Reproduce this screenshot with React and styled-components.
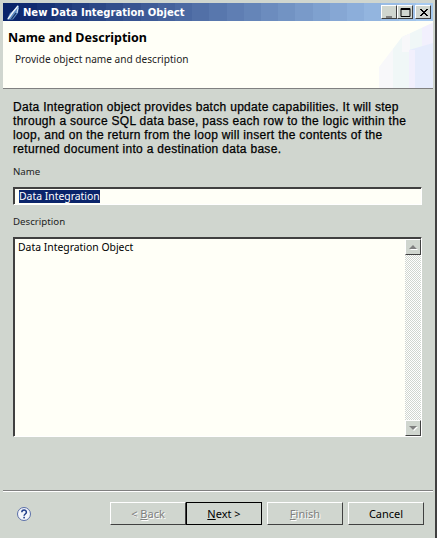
import React from "react";
import styled, { createGlobalStyle } from "styled-components";

const Colors = {
  FACE: "#d0d6cf",
  PAPER: "#fffff7",
  SHADOW: "#808080",
  DARK: "#404040",
  NAVY: "#0a246a",
};

const uiFont = `"Noto Sans", "DejaVu Sans", sans-serif`;

const GlobalStyle = createGlobalStyle`
  html, body {
    margin: 0;
    padding: 0;
    background: #fff;
  }
  * {
    box-sizing: border-box;
  }
`;

// the captured title bar gradient is banded, so build it from hard stops
const titleBands = (() => {
  const from = [10, 36, 106];
  const to = [166, 202, 240];
  const count = 25;
  const stops = [];
  for (let i = 0; i < count; i++) {
    const t = i / (count - 1);
    const c = from.map((v, n) => Math.round(v + (to[n] - v) * t));
    const start = ((i / count) * 100).toFixed(2);
    const end = (((i + 1) / count) * 100).toFixed(2);
    stops.push(`rgb(${c.join(",")}) ${start}% ${end}%`);
  }
  return stops.join(", ");
})();

export default function App() {
  return (
    <>
      <GlobalStyle />
      <Window>
        <TitleBar>
          <TitleIcon />
          <TitleText>New Data Integration Object</TitleText>
          <Controls>
            <CaptionButton label="Minimize">
              <rect x="3" y="9" width="6" height="2" fill="#808080" />
            </CaptionButton>
            <CaptionButton label="Maximize">
              <path d="M2 1.500h9v8h-9z M2 2.500h9" fill="none" stroke="#000" />
            </CaptionButton>
            <CaptionButton label="Close">
              <path d="M3 2l7 7M4 2l7 7M10 2l-7 7M11 2l-7 7" stroke="#000" fill="none" />
            </CaptionButton>
          </Controls>
        </TitleBar>
        <Banner>
          <BannerTitle>Name and Description</BannerTitle>
          <BannerText>Provide object name and description</BannerText>
          <BannerArt />
        </Banner>
        <Content>
          <Intro>
            Data Integration object provides batch update capabilities. It will step
            <br />
            through a source SQL data base, pass each row to the logic within the
            <br />
            loop, and on the return from the loop will insert the contents of the
            <br />
            returned document into a destination data base.
          </Intro>
          <FieldLabel>Name</FieldLabel>
          <NameField>
            <Selected>Data Integration</Selected>
          </NameField>
          <FieldLabel>Description</FieldLabel>
          <DescriptionField>
            <DescriptionText>Data Integration Object</DescriptionText>
            <ScrollBar>
              <ScrollButton>
                <Arrow />
              </ScrollButton>
              <ScrollTrack />
              <ScrollButton>
                <Arrow $down />
              </ScrollButton>
            </ScrollBar>
          </DescriptionField>
        </Content>
        <Separator />
        <Footer>
          <HelpIcon />
          <Buttons>
            <Button disabled>
              &lt; <u>B</u>ack
            </Button>
            <DefaultButton>
              <u>N</u>ext &gt;
            </DefaultButton>
            <SpacedButton disabled>
              <u>F</u>inish
            </SpacedButton>
            <SpacedButton>Cancel</SpacedButton>
          </Buttons>
        </Footer>
      </Window>
    </>
  );
}

const CaptionButton = ({ label, children }) => (
  <CaptionFace aria-label={label}>
    <svg width="13" height="11" viewBox="0 0 13 11">
      {children}
    </svg>
  </CaptionFace>
);

const TitleIcon = () => (
  <svg width="16" height="16" viewBox="0 0 16 16">
    <path d="M2 15.500 L5 9 L8 7 L13 1 L14 3 L13 9 L10 13 L8 15.500z" fill="#5f8cc4" />
    <path d="M3 15 L8 8 L13 2" stroke="#eef3f8" strokeWidth="1.300" fill="none" />
    <path d="M6.500 15 L11 9" stroke="#16305f" strokeWidth="1.200" fill="none" />
    <path d="M12 9 L13 4" stroke="#cfe0f2" fill="none" />
  </svg>
);

const HelpIcon = () => (
  <HelpSvg width="16" height="16" viewBox="0 0 16 16">
    <circle cx="8" cy="8" r="6.500" fill="#f3f5fb" stroke="#5a6fa8" />
    <path
      d="M5.800 6.300c0-3 4.600-3 4.600-.1 0 1.800-2.300 1.800-2.300 3.600"
      fill="none"
      stroke="#23408c"
      strokeWidth="1.500"
    />
    <rect x="7.300" y="10.800" width="1.600" height="1.600" fill="#23408c" />
  </HelpSvg>
);

const BannerArt = () => (
  <ArtSvg width="55" height="66" viewBox="0 0 55 66">
    <clipPath id="banner-art">
      <path d="M1 66V45L24 15 54 1 55 0V66z" />
    </clipPath>
    <g clipPath="url(#banner-art)">
      <rect width="15" height="66" fill="#f8f8fa" />
      <rect x="15" width="16" height="66" fill="#f0f7f7" />
      <rect x="24" width="8" height="30" fill="#f8f8fa" />
      <rect x="32" width="12" height="30" fill="#f0f7f7" />
      <rect x="44" width="11" height="30" fill="#f2f0fd" />
    </g>
    <path d="M31 28 L55 21 V66 H31z" fill="#e6ecfc" />
    <rect x="31" y="28" width="6" height="38" fill="#f2f0fd" />
  </ArtSvg>
);

const Window = styled.div`
  width: 437px;
  height: 538px;
  display: flex;
  flex-direction: column;
  padding: 3px 2px 0 3px;
  background: ${Colors.FACE};
  border-right: 2px solid ${Colors.DARK};
  font-family: ${uiFont};
  font-size: 10.400px;
  color: #000;
  overflow: hidden;
`;

const TitleBar = styled.div`
  flex: none;
  height: 18px;
  display: flex;
  align-items: center;
  padding: 0 2px;
  background: linear-gradient(to right, ${titleBands});
`;

const TitleText = styled.div`
  flex: 1;
  margin-left: 2px;
  font-family: "DejaVu Sans", Verdana, sans-serif;
  font-size: 10px;
  font-weight: bold;
  color: #fff;
  white-space: nowrap;
`;

const Controls = styled.div`
  display: flex;
`;

const CaptionFace = styled.div`
  width: 16px;
  height: 14px;
  display: flex;
  align-items: center;
  justify-content: center;
  background: ${Colors.FACE};
  border: 1px solid;
  border-color: #fff ${Colors.DARK} ${Colors.DARK} #fff;

  &:last-child {
    margin-left: 2px;
  }
`;

const Banner = styled.div`
  flex: none;
  position: relative;
  height: 68px;
  padding: 7px 5px 0;
  background: ${Colors.PAPER};
  border-bottom: 1px solid ${Colors.SHADOW};
  overflow: hidden;
`;

const BannerTitle = styled.div`
  font-size: 12.500px;
  font-weight: bold;
  line-height: 20px;
`;

const BannerText = styled.div`
  margin: 4px 0 0 7px;
  font-size: 10.100px;
  line-height: 14px;
  color: #222;
`;

const ArtSvg = styled.svg`
  position: absolute;
  right: 0;
  bottom: 0;
`;

const Content = styled.div`
  flex: 1;
  display: flex;
  flex-direction: column;
  padding: 10px 11px 0 10px;
`;

const Intro = styled.p`
  margin: 1px 0 -1px;
  font-family: "Liberation Sans", Arial, sans-serif;
  font-size: 12px;
  letter-spacing: 0.3px;
  line-height: 14px;
  white-space: nowrap;
  -webkit-text-stroke: 0.25px #000;
`;

const FieldLabel = styled.div`
  margin-top: 10px;
  font-size: 9.700px;
  line-height: 14px;
  color: #222;
`;

const Sunken = styled.div`
  margin-top: 8px;
  background: ${Colors.PAPER};
  border: 1px solid;
  border-color: ${Colors.DARK} #fff #fff ${Colors.DARK};
  box-shadow: inset 1px 1px 0 ${Colors.DARK};
`;

const NameField = styled(Sunken)`
  height: 18px;
  padding: 2px 0 0 5px;
  line-height: 13px;
`;

const Selected = styled.span`
  display: inline-block;
  background: ${Colors.NAVY};
  color: #fff;
`;

const DescriptionField = styled(Sunken)`
  height: 200px;
  display: flex;
  padding-top: 1px;
`;

const DescriptionText = styled.div`
  flex: 1;
  padding: 1px 4px;
  line-height: 14px;
`;

const ScrollBar = styled.div`
  width: 16px;
  display: flex;
  flex-direction: column;
`;

const ScrollButton = styled.div`
  flex: none;
  height: 16px;
  display: flex;
  align-items: center;
  justify-content: center;
  background: ${Colors.FACE};
  border: 1px solid;
  border-color: #fff ${Colors.DARK} ${Colors.DARK} #fff;
`;

const ScrollTrack = styled.div`
  flex: 1;
  background-color: ${Colors.FACE};
  background-image: conic-gradient(#fff 25%, transparent 0 50%, #fff 0 75%, transparent 0);
  background-size: 2px 2px;
`;

const Arrow = styled.div`
  width: 0;
  height: 0;
  border-left: 4px solid transparent;
  border-right: 4px solid transparent;
  filter: drop-shadow(1px 1px 0 #fff);
  ${({ $down }) =>
    $down ? `border-top: 4px solid #808080;` : `border-bottom: 4px solid #808080;`}
`;

const Separator = styled.div`
  flex: none;
  height: 2px;
  border-top: 1px solid ${Colors.SHADOW};
  border-bottom: 1px solid #fff;
`;

const Footer = styled.div`
  flex: none;
  height: 46px;
  display: flex;
  align-items: flex-start;
  justify-content: space-between;
  padding: 10px 9px 0 13px;
`;

const HelpSvg = styled.svg`
  margin-top: 4px;
`;

const Buttons = styled.div`
  display: flex;
`;

const Button = styled.button`
  width: 76px;
  height: 23px;
  padding: 0;
  background: ${Colors.FACE};
  border: 1px solid;
  border-color: #fff ${Colors.DARK} ${Colors.DARK} #fff;
  font-family: ${uiFont};
  font-size: 11px;
  color: #000;

  &:disabled {
    color: #808080;
    text-shadow: 1px 1px 0 #fff;
  }
`;

const DefaultButton = styled(Button)`
  border-color: #000;
`;

const SpacedButton = styled(Button)`
  margin-left: 5px;
`;
